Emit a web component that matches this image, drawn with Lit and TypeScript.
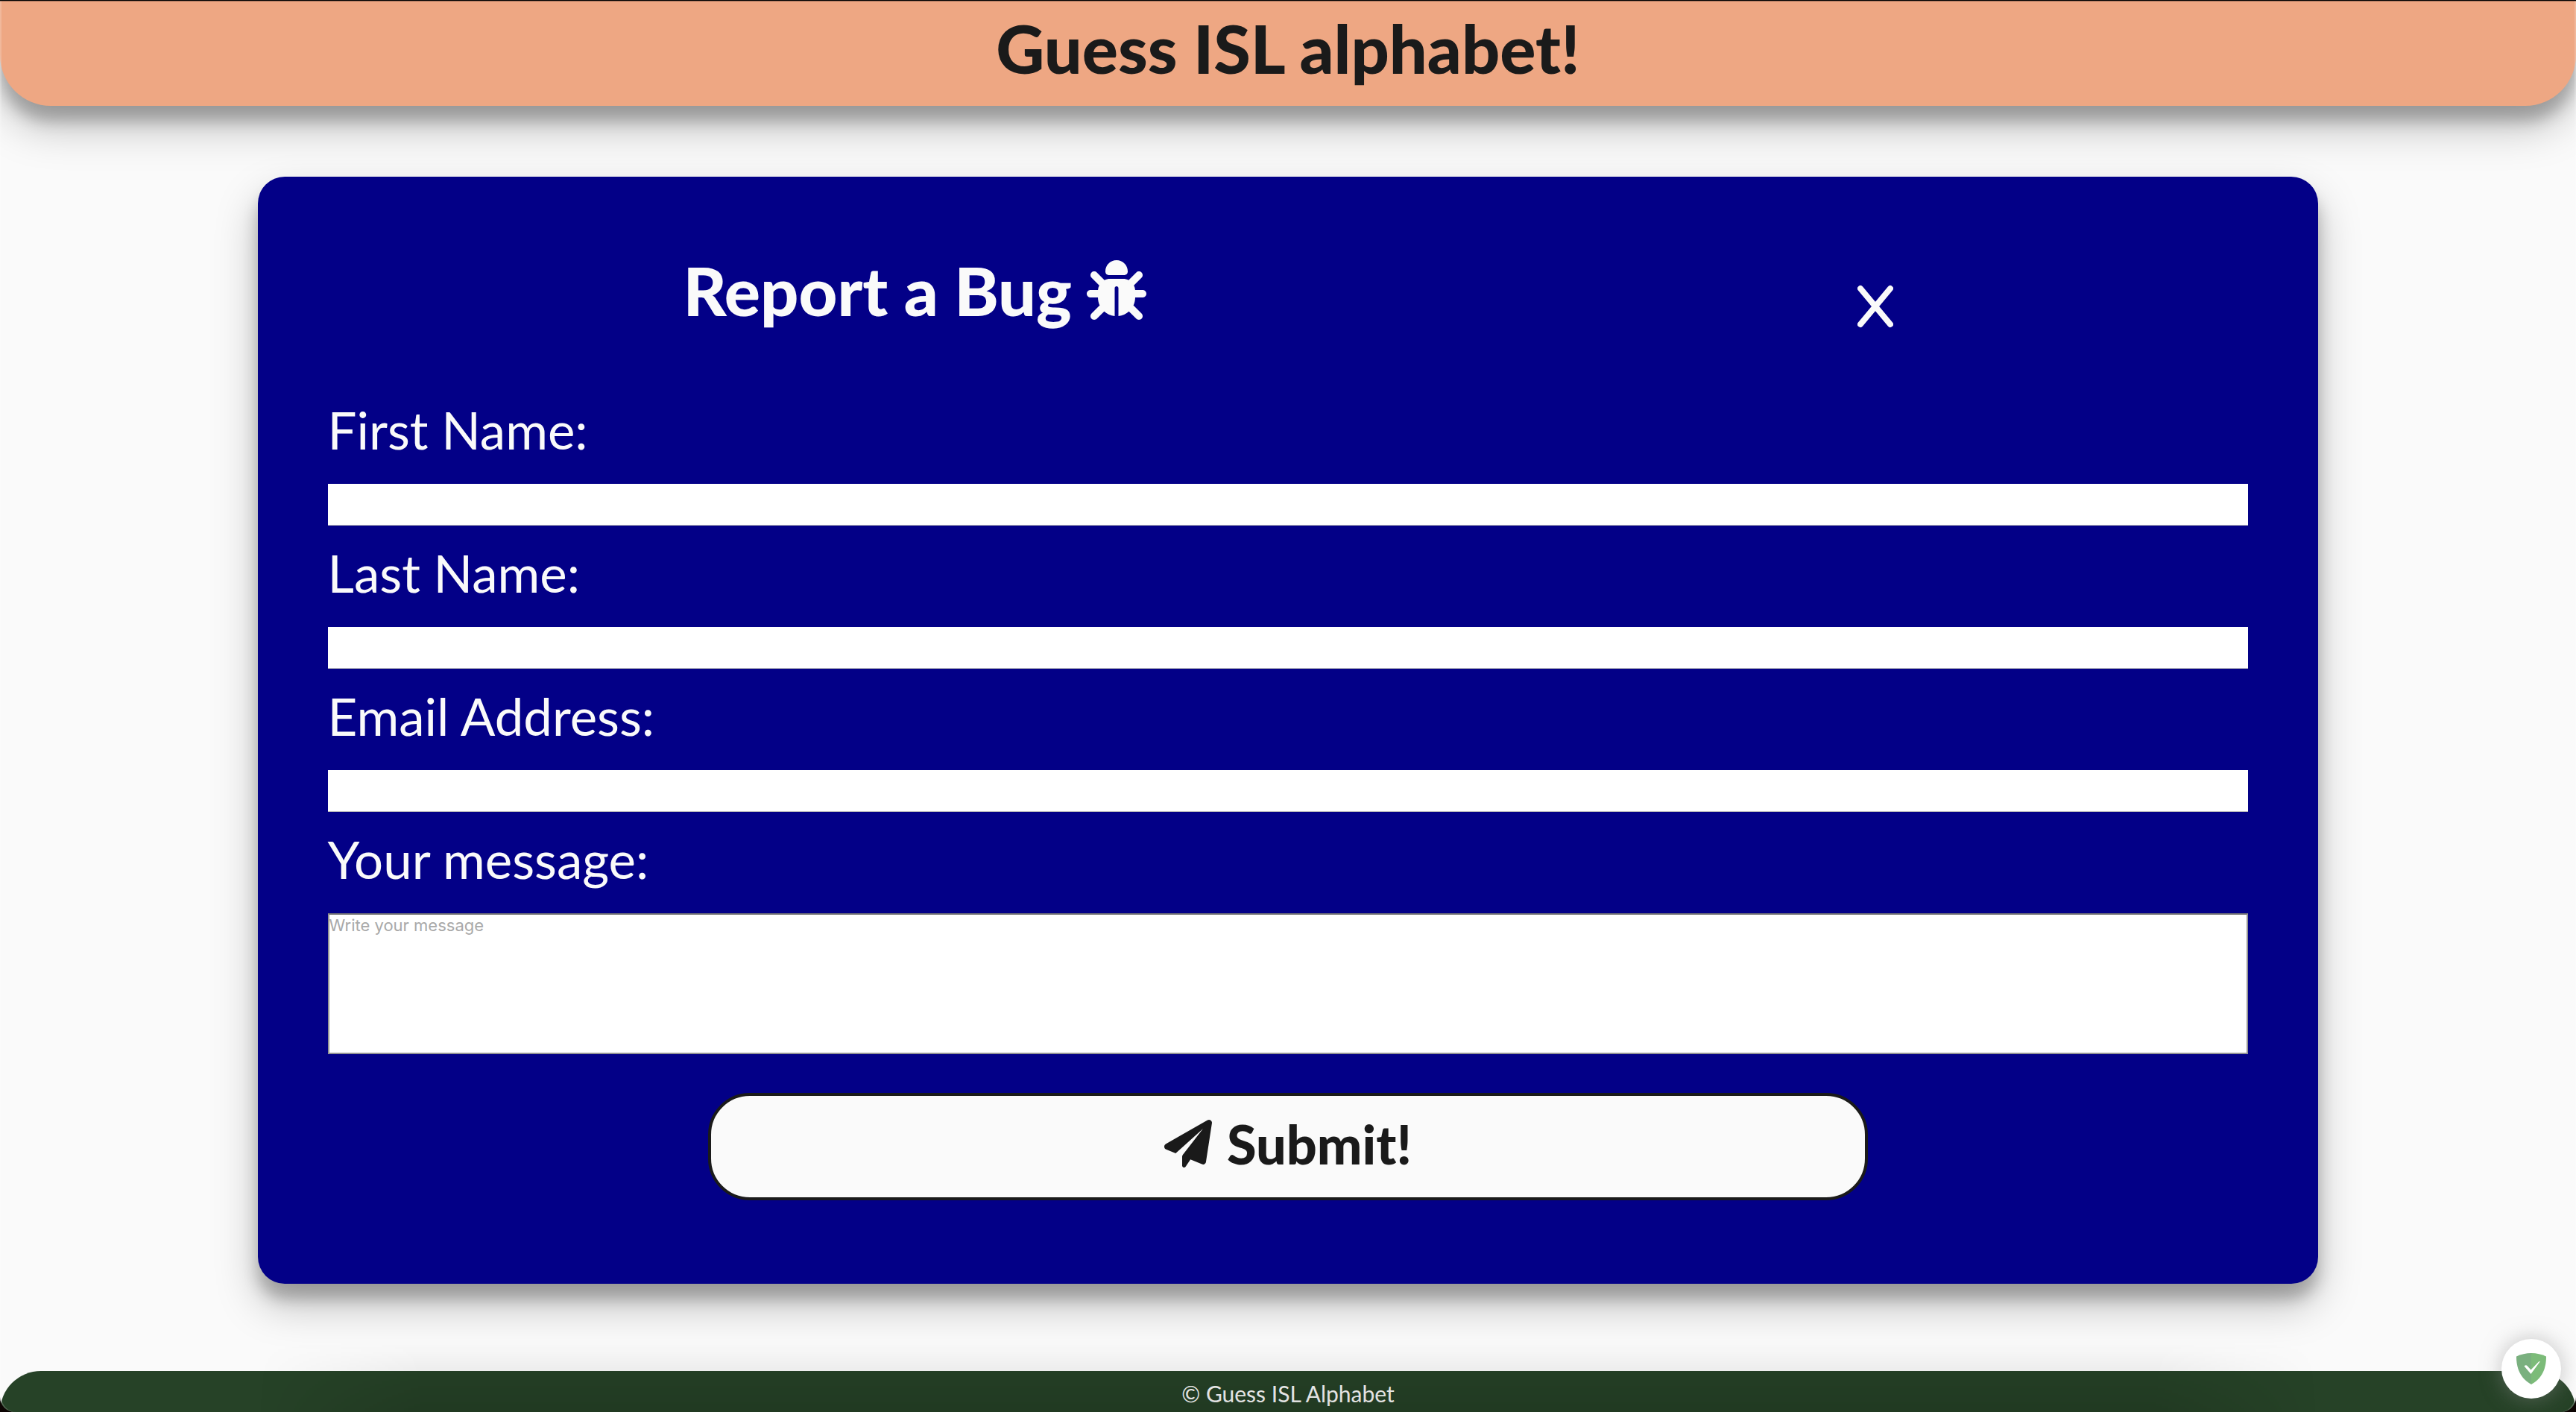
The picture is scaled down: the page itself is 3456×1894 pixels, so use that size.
import { LitElement, html, css, svg } from "lit";
import { customElement } from "lit/decorators.js";

const bugIcon = svg`<path d="M352 96V99.56C352 115.3 339.3 128 323.6 128H188.4C172.7 128 160 115.3 160 99.56V96C160 42.98 202.1 0 256 0C309 0 352 42.98 352 96zM41.37 105.4C53.87 92.88 74.13 92.88 86.63 105.4L150.6 169.4C151.3 170 151.9 170.7 152.5 171.4C166.8 164.1 182.9 160 199.1 160H312C329.1 160 345.2 164.1 359.5 171.4C360.1 170.7 360.7 170 361.4 169.4L425.4 105.4C437.9 92.88 458.1 92.88 470.6 105.4C483.1 117.9 483.1 138.1 470.6 150.6L406.6 214.6C405.1 215.3 405.3 215.9 404.6 216.5C410.7 228.5 414.6 241.9 415.7 256H480C497.7 256 512 270.3 512 288C512 305.7 497.7 320 480 320H416C416 344.6 410.5 367.8 400.6 388.6C402.7 389.9 404.8 391.5 406.6 393.4L470.6 457.4C483.1 469.9 483.1 490.1 470.6 502.6C458.1 515.1 437.9 515.1 425.4 502.6L362.3 439.6C337.8 461.4 306.5 475.8 272 479.2V240C272 231.2 264.8 224 256 224C247.2 224 240 231.2 240 240V479.2C205.5 475.8 174.2 461.4 149.7 439.6L86.63 502.6C74.13 515.1 53.87 515.1 41.37 502.6C28.88 490.1 28.88 469.9 41.37 457.4L105.4 393.4C107.2 391.5 109.3 389.9 111.4 388.6C101.5 367.8 96 344.6 96 320H32C14.33 320 0 305.7 0 288C0 270.3 14.33 256 32 256H96.3C97.38 241.9 101.3 228.5 107.4 216.5C106.7 215.9 106 215.3 105.4 214.6L41.37 150.6C28.88 138.1 28.88 117.9 41.37 105.4z"/>`;

const planeIcon = svg`<path d="M511.6 36.86l-64 415.1c-1.5 9.734-7.375 18.22-15.97 23.05c-4.844 2.719-10.27 4.097-15.68 4.097c-4.188 0-8.319-.8154-12.29-2.472l-122.6-51.1l-50.86 76.29C226.3 508.5 219.8 512 212.8 512C201.3 512 192 502.7 192 491.2v-96.18c0-7.115 2.372-14.03 6.742-19.64L416 96l-293.7 264.3L19.69 317.5C8.438 312.8 .8125 302.2 .0625 289.1s5.469-23.72 16.06-29.77l448-255.1c10.69-6.109 23.88-5.547 34 1.406S513.5 24.72 511.6 36.86z"/>`;

interface Field {
  id: string;
  label: string;
  type: string;
}

const fields: Field[] = [
  { id: "first-name", label: "First Name:", type: "text" },
  { id: "last-name", label: "Last Name:", type: "text" },
  { id: "email", label: "Email Address:", type: "email" },
];

@customElement("bug-form")
export class BugForm extends LitElement {
  static styles = css`
    :host {
      display: block;
    }
    *, *::before, *::after {
      box-sizing: border-box;
    }
    .card {
      padding: 96px 94px 112px;
      border-radius: 36px;
      background: #030087;
      color: #fafafa;
      box-shadow: 0 28px 56px rgba(0, 0, 0, 0.25), 0 20px 20px rgba(0, 0, 0, 0.22);
    }
    .head {
      display: flex;
      justify-content: space-around;
      align-items: flex-end;
      margin-bottom: 68px;
    }
    .title {
      display: flex;
      align-items: center;
      gap: 20px;
      margin: 0;
      font-size: 90px;
      font-weight: 900;
      line-height: 112px;
    }
    .bug {
      width: 80px;
      height: 80px;
      fill: currentColor;
    }
    .close {
      padding: 0 0 2px;
      border: 0;
      background: none;
      color: inherit;
      cursor: pointer;
    }
    .cross {
      display: block;
      width: 48px;
      height: 64px;
      fill: none;
      stroke: currentColor;
      stroke-width: 64;
      stroke-linecap: round;
    }
    .form {
      display: flex;
      flex-direction: column;
    }
    .label {
      padding-bottom: 8px;
      font-size: 69px;
      line-height: 128px;
    }
    .input {
      width: 100%;
      height: 56px;
      padding: 0 4px;
      border: 0;
      border-bottom: 1px solid #c0c0c0;
      border-radius: 0;
      background: #fff;
      font: 22px/28px Inter, sans-serif;
    }
    .message {
      width: 100%;
      height: 189px;
      padding: 0;
      border: 2px solid #949494;
      border-top-color: #767676;
      border-radius: 0;
      background: #fff;
      font: 22px/28px Inter, sans-serif;
      resize: none;
    }
    .message::placeholder {
      color: #a9a9a9;
    }
    .submit {
      display: flex;
      align-items: center;
      justify-content: center;
      gap: 20px;
      align-self: center;
      width: 45vw;
      margin-top: 52px;
      padding: 0 0 8px;
      border: 4px solid #1a1a1a;
      border-radius: 56px;
      background: #fafafa;
      color: #1a1a1a;
      font: inherit;
      font-size: 72px;
      font-weight: 900;
      line-height: 128px;
      cursor: pointer;
    }
    .plane {
      width: 64px;
      height: 64px;
      fill: currentColor;
    }
  `;

  render() {
    return html`
      <section class="card">
        <div class="head">
          <h2 class="title">
            Report a Bug
            <svg class="bug" viewBox="0 0 512 512" aria-hidden="true">${bugIcon}</svg>
          </h2>
          <button class="close" type="button" aria-label="Close">
            <svg class="cross" viewBox="0 0 384 512" aria-hidden="true">
              <path d="M32 64L352 448M352 64L32 448" />
            </svg>
          </button>
        </div>
        <form class="form" @submit=${(e: Event) => e.preventDefault()}>
          ${fields.map(
            (f) => html`
              <label class="label" for=${f.id}>${f.label}</label>
              <input class="input" id=${f.id} name=${f.id} type=${f.type} />
            `
          )}
          <label class="label" for="message">Your message:</label>
          <textarea class="message" id="message" name="message" placeholder="Write your message"></textarea>
          <button class="submit" type="submit">
            <svg class="plane" viewBox="0 0 512 512" aria-hidden="true">${planeIcon}</svg>
            Submit!
          </button>
        </form>
      </section>
    `;
  }
}

@customElement("app-root")
export class AppRoot extends LitElement {
  static styles = css`
    :host {
      display: flex;
      flex-direction: column;
      position: relative;
      height: 100vh;
      overflow: hidden;
      background: #fafafa;
      color: #fafafa;
      font-family: Lato, "Noto Sans", sans-serif;
    }
    .banner {
      flex: none;
      padding-bottom: 14px;
      border-radius: 0 0 68px 68px;
      background: #eea783;
      color: #1a1a1a;
      text-align: center;
      box-shadow: 0 28px 56px rgba(0, 0, 0, 0.25), 0 20px 20px rgba(0, 0, 0, 0.22);
    }
    .brand {
      margin: 0;
      font-size: 90px;
      font-weight: 900;
      line-height: 128px;
    }
    .main {
      flex: none;
      width: 80%;
      margin: 95px auto 117px;
    }
    .footer {
      flex: 1 0 auto;
      position: relative;
      padding-top: 14px;
      border-radius: 56px 56px 0 0;
      background: #264227;
      text-align: center;
      font-size: 30px;
      line-height: 32px;
    }
    /* soft shade rising from the bottom edge of the window */
    .footer::after {
      content: "";
      position: absolute;
      inset: -40px 10% 0;
      background: linear-gradient(transparent, rgba(0, 0, 0, 0.12));
      mask-image: linear-gradient(90deg, transparent, #000 8%, #000 92%, transparent);
      pointer-events: none;
    }
    .text {
      margin: 0;
    }
    .badge {
      position: absolute;
      right: 20px;
      bottom: 18px;
      display: grid;
      place-items: center;
      width: 80px;
      height: 80px;
      padding: 0;
      border: 0;
      border-radius: 50%;
      background: #fff;
      box-shadow: 0 0 28px rgba(140, 140, 140, 0.5);
      cursor: pointer;
    }
    .shield {
      width: 40px;
      height: 42px;
    }
    /* rounded window edge over the page */
    .frame {
      position: absolute;
      inset: 0;
      border-top: 1px solid #000;
      border-radius: 0 0 20px 20px;
      box-shadow: inset 0 1px 0 rgba(0, 0, 0, 0.35), inset 2px 0 0 rgba(255, 255, 255, 0.2),
        inset -2px 0 0 rgba(255, 255, 255, 0.2), 0 20px 0 0 #0d0503;
      pointer-events: none;
    }
  `;

  render() {
    return html`
      <header class="banner"><h1 class="brand">Guess ISL alphabet!</h1></header>
      <main class="main"><bug-form></bug-form></main>
      <footer class="footer"><p class="text">© Guess ISL Alphabet</p></footer>
      <button class="badge" type="button" aria-label="Protection">
        <svg class="shield" viewBox="0 0 40 42" aria-hidden="true">
          <path fill="#7ab07f" d="M20 0C13 0 6 1.500 0 4.500C0 15 2 32 20 42Z" />
          <path fill="#7cbb79" d="M20 0C27 0 34 1.500 40 4.500C40 15 38 32 20 42Z" />
          <path fill="#fff" d="M10.500 17.500C12 15.800 13.500 15.800 14.500 17L19.500 22.500L30 11.500L32 11L19.500 28Z" />
        </svg>
      </button>
      <div class="frame"></div>
    `;
  }
}
